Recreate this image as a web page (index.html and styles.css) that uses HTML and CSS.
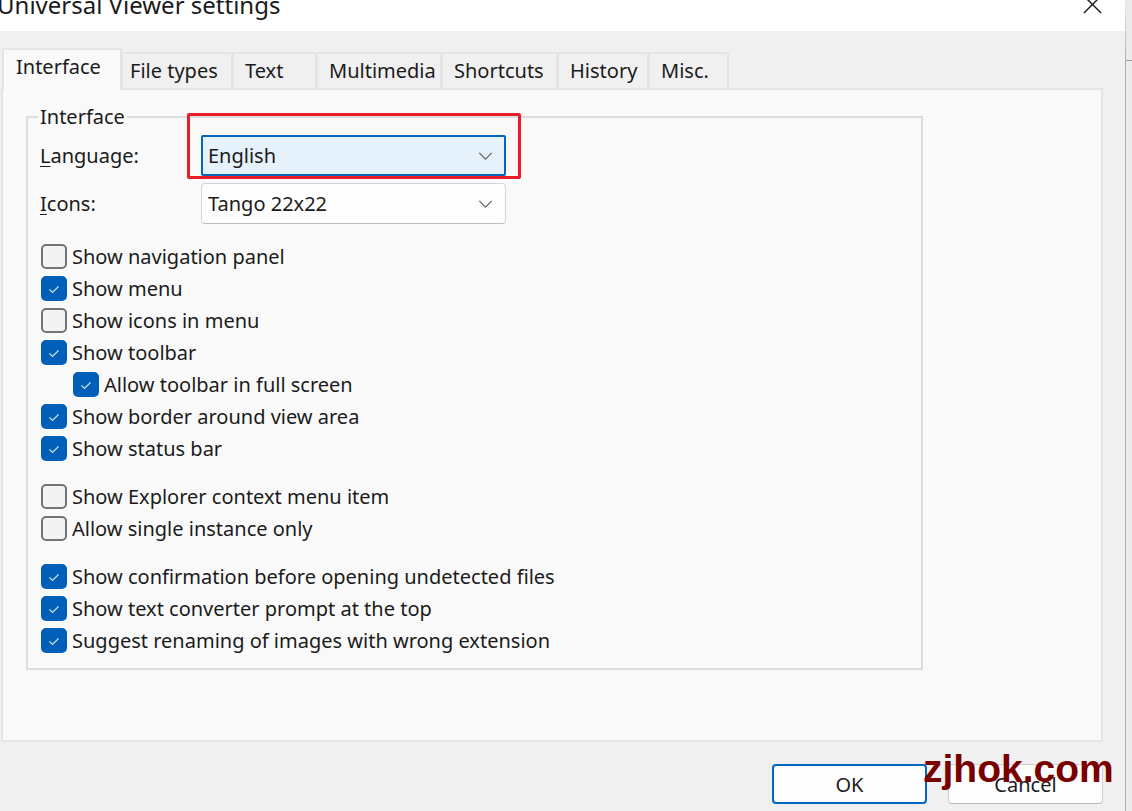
FILE: index.html
```html
<!DOCTYPE html>
<html lang="en">
<head>
    <meta charset="UTF-8">
    <title>Universal Viewer settings</title>
    <link rel="stylesheet" href="styles.css">
</head>
<body>
    <div class="screen">
        <div class="window">
            <div class="titlebar">
                <span class="title">Universal Viewer settings</span>
                <svg class="close" viewBox="0 0 20 20"><path d="M1 1 L19 19 M19 1 L1 19" stroke="#1a1a1a" stroke-width="1.5" fill="none"/></svg>
            </div>
            <div class="body">
                <div class="tabs">
                    <div class="tab active">Interface</div>
                    <div class="tab">File types</div>
                    <div class="tab">Text</div>
                    <div class="tab">Multimedia</div>
                    <div class="tab">Shortcuts</div>
                    <div class="tab">History</div>
                    <div class="tab">Misc.</div>
                </div>
                <div class="panel">
                    <fieldset class="group">
                        <legend>Interface</legend>
                        <div class="field">
                            <label><u>L</u>anguage:</label>
                            <div class="combo focused">
                                <span>English</span>
                                <svg class="chev" viewBox="0 0 16 9"><path d="M1 1 L8 8 L15 1" stroke="#5f5f5f" stroke-width="1.3" fill="none"/></svg>
                            </div>
                            <div class="mark"></div>
                        </div>
                        <div class="field">
                            <label><u>I</u>cons:</label>
                            <div class="combo">
                                <span>Tango 22x22</span>
                                <svg class="chev" viewBox="0 0 16 9"><path d="M1 1 L8 8 L15 1" stroke="#5f5f5f" stroke-width="1.3" fill="none"/></svg>
                            </div>
                        </div>
                        <ul class="checks">
                            <li><span class="box"></span>Show navigation panel</li>
                            <li><span class="box on"></span>Show menu</li>
                            <li><span class="box"></span>Show icons in menu</li>
                            <li><span class="box on"></span>Show toolbar</li>
                            <li class="sub"><span class="box on"></span>Allow toolbar in full screen</li>
                            <li><span class="box on"></span>Show border around view area</li>
                            <li><span class="box on"></span>Show status bar</li>
                            <li class="gap"><span class="box"></span>Show Explorer context menu item</li>
                            <li><span class="box"></span>Allow single instance only</li>
                            <li class="gap"><span class="box on"></span>Show confirmation before opening undetected files</li>
                            <li><span class="box on"></span>Show text converter prompt at the top</li>
                            <li><span class="box on"></span>Suggest renaming of images with wrong extension</li>
                        </ul>
                    </fieldset>
                </div>
                <div class="buttons">
                    <button class="btn default">OK</button>
                    <button class="btn">Cancel</button>
                </div>
            </div>
        </div>
        <div class="desktop"></div>
        <div class="watermark">zjhok.com</div>
    </div>
</body>
</html>
```

FILE: styles.css
```css
* {
    padding: 0;
    margin: 0;
    box-sizing: border-box;
}

body {
    width: 1132px;
    height: 811px;
    overflow: hidden;
    background: #f0f0f0;
    font-family: "Noto Sans", sans-serif;
    font-size: 20px;
    color: #1b1b1b;
}

.screen {
    position: relative;
    display: flex;
    height: 811px;
}

.window {
    width: 1125px;
    display: flex;
    flex-direction: column;
    background: #f0f0f0;
}

.titlebar {
    height: 31px;
    background: #fff;
    display: flex;
    justify-content: space-between;
    overflow: hidden;
}

.title {
    font-size: 24px;
    line-height: 24px;
    margin-top: -7px;
    margin-left: -3px;
}

.close {
    width: 19px;
    height: 19px;
    margin: -5px 23px 0 0;
}

.body {
    flex: 1;
    padding: 17px 0 0 1px;
    display: flex;
    flex-direction: column;
}

.tabs {
    display: flex;
    align-items: flex-end;
    height: 40px;
    padding-left: 1px;
    position: relative;
    z-index: 1;
}

.tab {
    height: 36px;
    border: 2px solid #e4e4e4;
    border-bottom: none;
    border-left-width: 1px;
    background: #f0f0f0;
    padding-left: 11px;
    line-height: 34px;
    white-space: nowrap;
}

.tab:nth-child(1) { width: 120px; }
.tab:nth-child(2) { width: 111px; padding-left: 7px; }
.tab:nth-child(3) { width: 84px; }
.tab:nth-child(4) { width: 125px; }
.tab:nth-child(5) { width: 116px; }
.tab:nth-child(6) { width: 91px; }
.tab:nth-child(7) { width: 80px; }

.tab.active {
    height: 42px;
    margin-bottom: -2px;
    border-left-width: 2px;
    background: #f9f9f9;
    padding-left: 12px;
    line-height: 34px;
}

.panel {
    width: 1102px;
    height: 654px;
    background: #f9f9f9;
    border: 2px solid #e4e4e4;
    padding: 0 0 0 23px;
}

.group {
    width: 897px;
    height: 565px;
    margin-top: 15px;
    border: 2px solid #dcdcdc;
    padding: 6px 12px 0 12px;
}

.group legend {
    padding: 0 2px;
    margin-left: -2px;
    line-height: 24px;
}

.field {
    position: relative;
    display: flex;
    align-items: center;
    height: 41px;
    margin-bottom: 7px;
}

.field label {
    width: 161px;
}

.field u {
    text-decoration-thickness: 1px;
    text-underline-offset: 3px;
}

.combo {
    width: 305px;
    height: 41px;
    border: 1px solid #d4d4d4;
    border-bottom-color: #bcbcbc;
    border-radius: 4px;
    background: #fdfdfd;
    display: flex;
    align-items: center;
    justify-content: space-between;
    padding: 0 12px 0 6px;
}

.combo.focused {
    background: #e5f1fb;
    border: 2px solid #0067c0;
    border-radius: 2px;
    padding-left: 5px;
    padding-right: 11px;
}

.chev {
    width: 15px;
    height: 8px;
}

/* red annotation around the language box */
.mark {
    position: absolute;
    left: 147px;
    top: -22px;
    width: 334px;
    height: 66px;
    border: 3px solid #ea1c2a;
    border-radius: 2px;
}

.checks {
    list-style: none;
    margin-top: 16px;
}

.checks li {
    display: flex;
    align-items: center;
    height: 32px;
    white-space: nowrap;
}

.checks li.sub {
    padding-left: 32px;
}

.checks li.gap {
    margin-top: 16px;
}

.box {
    width: 26px;
    height: 25px;
    margin: 0 5px 0 1px;
    border: 2px solid #747474;
    border-radius: 5px;
    background: #f3f3f3;
    flex: none;
}

.box.on {
    border-color: #005fb8;
    background: #005fb8 url("data:image/svg+xml,%3Csvg xmlns='http://www.w3.org/2000/svg' width='22' height='21'%3E%3Cpath d='M6.5 11.5 L9.5 14.5 L15.5 8.5' stroke='%23cfe2f6' stroke-width='1.2' fill='none'/%3E%3C/svg%3E") no-repeat center;
}

.buttons {
    display: flex;
    justify-content: flex-end;
    gap: 21px;
    width: 1102px;
    margin-top: 22px;
}

.btn {
    width: 155px;
    height: 40px;
    font: inherit;
    color: #1b1b1b;
    background: #fdfdfd;
    border: 1px solid #d0d0d0;
    border-bottom-color: #b8b8b8;
    border-radius: 4px;
}

.btn.default {
    border: 2px solid #0067c0;
}

.desktop {
    flex: 1;
    border-left: 1px solid #b0b0b0;
    background: #ebebeb;
    border-top: 60px solid #ebebeb;
    box-shadow: inset 0 1px 0 #9a9a9a;
}

.watermark {
    position: absolute;
    left: 923px;
    top: 747px;
    font-family: "Liberation Sans", sans-serif;
    font-weight: bold;
    font-size: 39px;
    color: #7a0000;
}
```
